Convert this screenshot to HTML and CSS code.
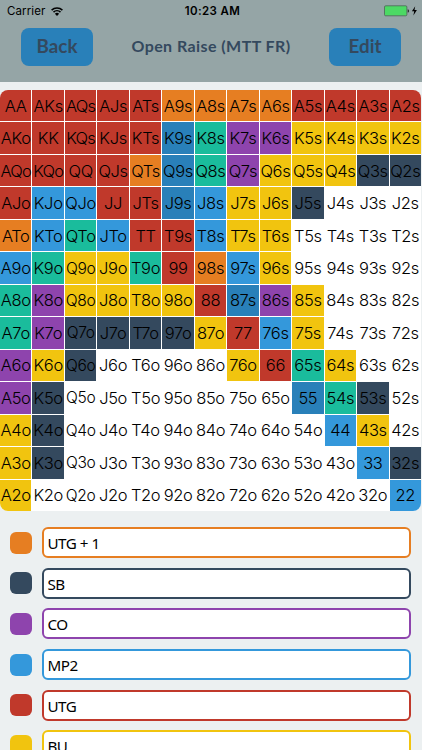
FILE: index.html
```html
<!DOCTYPE html>
<html lang="en">
<head>
<meta charset="utf-8">
<title>Open Raise (MTT FR)</title>
<link rel="stylesheet" href="styles.css">
</head>
<body>
<header class="header">
  <div class="status">
    <div class="carrier"><span>Carrier</span>
      <svg class="wifi" viewBox="0 0 12 9" width="12" height="9"><path d="M.6 3.1a7.7 7.7 0 0 1 10.8 0M2.5 5.1a5 5 0 0 1 7 0" fill="none" stroke="#000" stroke-width="1.5"/><path d="M6 8.9 3.9 6.8a3 3 0 0 1 4.2 0z"/></svg>
    </div>
    <div class="time">10:23 AM</div>
    <div class="power">
      <svg viewBox="0 0 34 12" width="34" height="12"><rect x=".5" y=".8" width="22.4" height="10" rx="1.2" fill="#4cd964" stroke="#4b5552" stroke-width=".7"/><path d="M23.7 4.2q1.4 0 1.4 1.7t-1.4 1.7z" fill="#29302e"/><path d="M31.2 1.2 27.9 6.3h2.3l-.8 4.2 3.5-5.4h-2.4z"/></svg>
    </div>
  </div>
  <nav class="nav">
    <button class="button">Back</button>
    <h1 class="title">Open Raise (MTT FR)</h1>
    <button class="button">Edit</button>
  </nav>
</header>
<main>
  <div class="grid" id="grid"></div>
  <ul class="legend">
    <li class="entry o"><span class="swatch"></span><span class="field">UTG + 1</span></li>
    <li class="entry d"><span class="swatch"></span><span class="field">SB</span></li>
    <li class="entry p"><span class="swatch"></span><span class="field">CO</span></li>
    <li class="entry l"><span class="swatch"></span><span class="field">MP2</span></li>
    <li class="entry r"><span class="swatch"></span><span class="field">UTG</span></li>
    <li class="entry y"><span class="swatch"></span><span class="field">BU</span></li>
  </ul>
</main>
<script src="script.js"></script>
</body>
</html>
```
FILE: script.js
```js
// Colour of each starting hand, one letter per cell.
const ranges = [
  'rrrrroooorrrr',
  'rrrrrbtppyyyy',
  'rrrrobtpyyydd',
  'rllrrblyydwww',
  'oltlrrlyywwww',
  'ltyytrolywwww',
  'tpyyyyrbpywww',
  'tpddddyrlywww',
  'pydwwwwyrtyww',
  'pdwwwwwwwbtdw',
  'ydwwwwwwwwlyw',
  'ydwwwwwwwwwld',
  'ywwwwwwwwwwwl'
];
const ranks = 'AKQJT98765432';
const grid = document.getElementById('grid');

ranges.forEach((row, i) => {
  [...row].forEach((colour, j) => {
    const cell = document.createElement('div');
    const hand = i === j ? ranks[i] + ranks[i]
      : i < j ? ranks[i] + ranks[j] + 's'
      : ranks[j] + ranks[i] + 'o';
    cell.className = 'cell ' + colour;
    if (hand[0] === 'Q' && i > 4) cell.classList.add('tight');
    if (/^[AK]Q/.test(hand)) cell.classList.add('wide');
    cell.textContent = hand;
    grid.append(cell);
  });
});
```
FILE: styles.css
```css
* { box-sizing: border-box; }
body {
  margin: 0;
  height: 750px;
  overflow: hidden;
  background: #ecf0f1;
  color: #000;
  font-family: Inter, "Liberation Sans", sans-serif;
}
.header { height: 82px; background: #95a5a6; }
.status {
  display: grid;
  grid-template-columns: 1fr auto 1fr;
  height: 22px;
  padding: 0 4px 0 7px;
  align-items: center;
  font-size: 11.5px;
}
.carrier { display: flex; align-items: center; gap: 6px; letter-spacing: .1px; }
.time { font-weight: 600; letter-spacing: .4px; }
.power { display: flex; justify-content: flex-end; }
.nav {
  display: flex;
  justify-content: space-between;
  align-items: center;
  margin-top: 6px;
  padding: 0 21px;
  font-family: Lato, sans-serif;
  color: #34495e;
}
.button {
  width: 72px;
  height: 38px;
  padding: 0 0 3px;
  border: 0;
  border-radius: 8px;
  background: #2980b9;
  color: #34495e;
  font: 700 18.8px Lato, sans-serif;
}
.title {
  margin: 0;
  padding-bottom: 4px;
  font-size: 16px;
  font-weight: 700;
  letter-spacing: .43px;
  white-space: nowrap;
}
.grid {
  display: grid;
  grid-template-columns: repeat(13, 1fr);
  grid-template-rows: repeat(13, 1fr);
  gap: 1px;
  width: 421px;
  height: 421px;
  margin-top: 8px;
  overflow: hidden;
  border-radius: 8px;
  background: #fff;
}
.cell {
  display: flex;
  min-width: 0;
  align-items: center;
  justify-content: center;
  background: var(--tone);
  font-size: 16.5px;
  font-weight: 350;
  letter-spacing: -.35px;
  white-space: nowrap;
}
.tight { font-size: 15.6px; }
.wide { letter-spacing: -.8px; }
.r { --tone: #c0392b; }
.o { --tone: #e67e22; }
.b { --tone: #2980b9; }
.t { --tone: #1abc9c; }
.p { --tone: #8e44ad; }
.y { --tone: #f1c40f; }
.d { --tone: #34495e; }
.l { --tone: #3498db; }
.w { --tone: #fff; }
.legend {
  display: flex;
  flex-direction: column;
  gap: 9.7px;
  margin: 0;
  padding: 16px 11px 0 10px;
  list-style: none;
}
.entry { display: flex; align-items: center; gap: 10px; height: 31px; }
.swatch { width: 22px; height: 22px; border-radius: 6px; background: var(--tone); }
.field {
  flex: 1;
  height: 31px;
  padding-left: 3.5px;
  border: 2px solid var(--tone);
  border-radius: 6px;
  background: #fff;
  font: 15.2px/29px "Noto Sans", sans-serif;
  letter-spacing: -.5px;
}
```
